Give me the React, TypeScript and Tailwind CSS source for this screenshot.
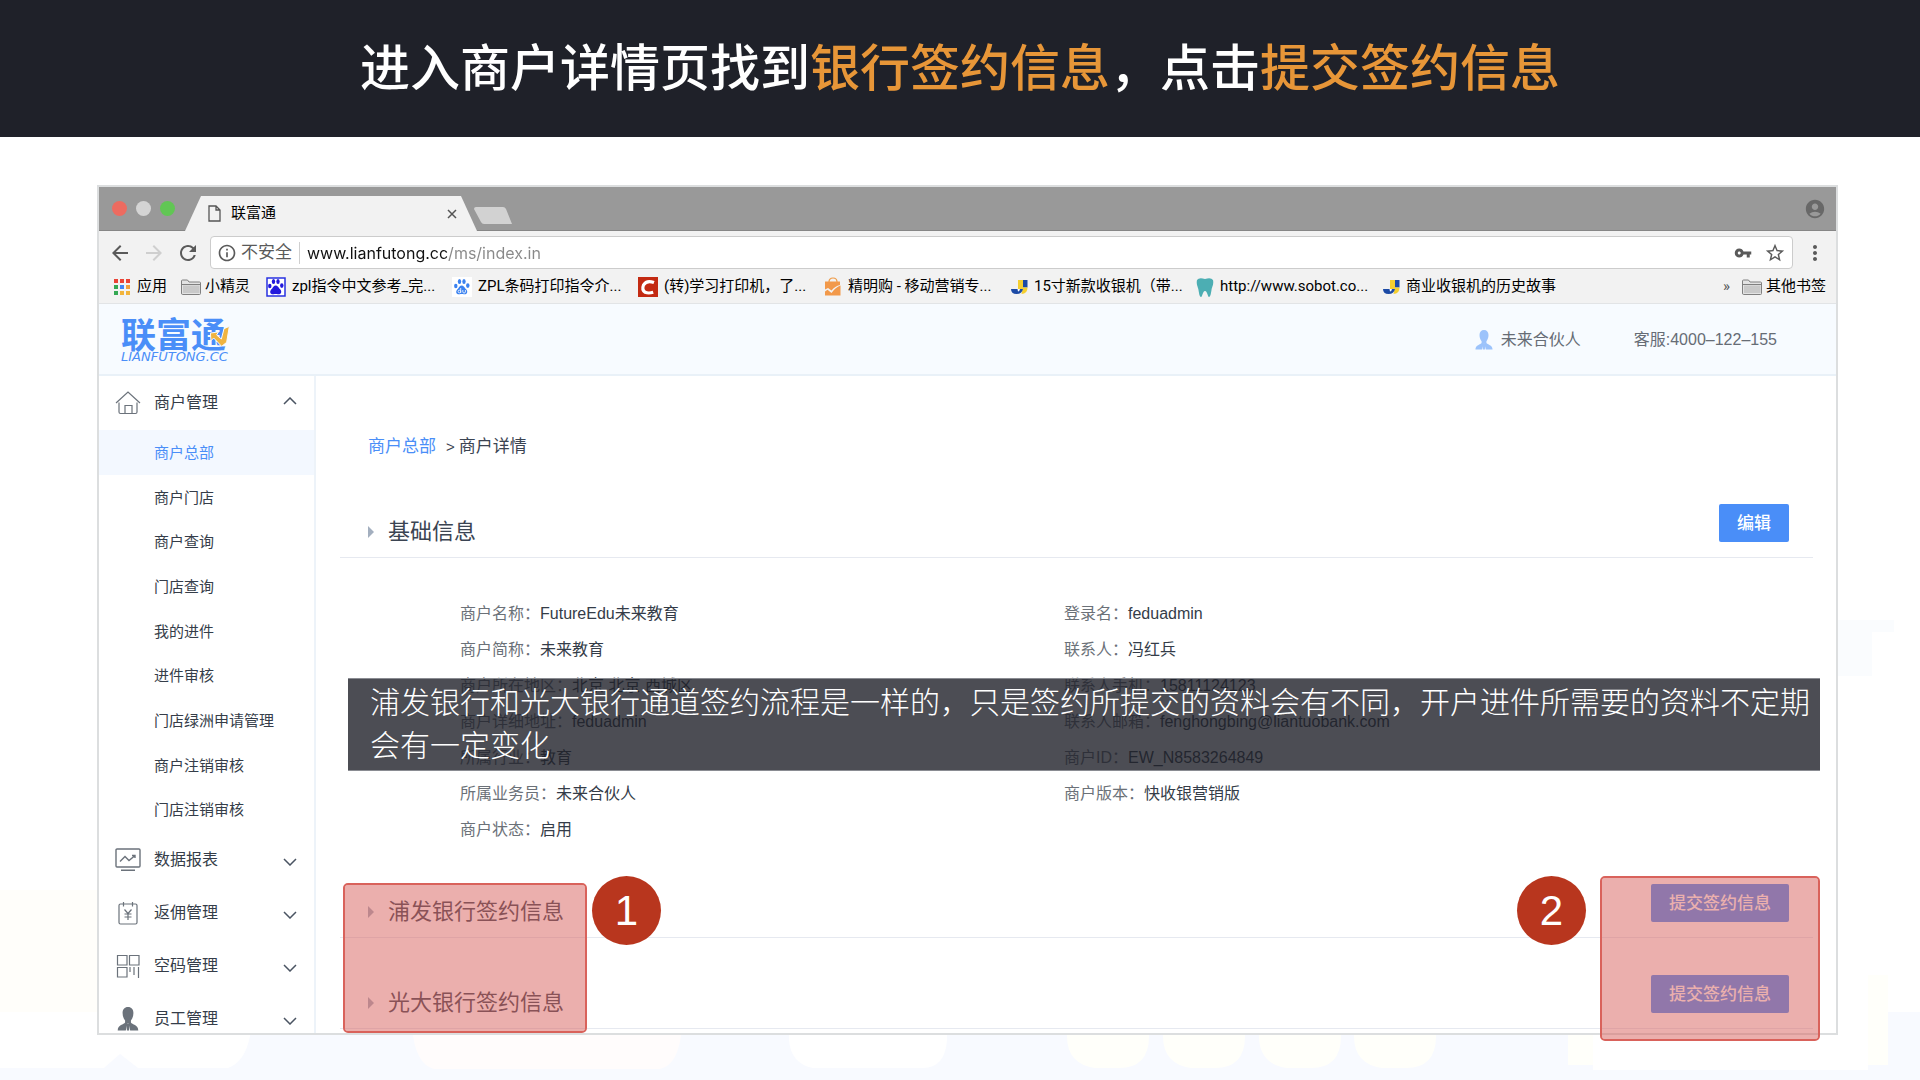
import React from 'react';
import {
  MdAccountCircle,
  MdArrowBack,
  MdArrowForward,
  MdInfoOutline,
  MdMoreVert,
  MdRefresh,
  MdStarBorder,
  MdVpnKey,
} from 'react-icons/md';

type IconProps = { className?: string };

/* ---------- Bookmark icons ---------- */

const AppsIcon: React.FC = () => (
  <svg viewBox="0 0 16 16" className="h-4 w-4 shrink-0">
    <path d="M0 0h4v4H0zM6 0h4v4H6zM12 0h4v4h-4z" fill="#ea4335" />
    <path d="M0 6h4v4H0z" fill="#34a853" />
    <path d="M6 6h4v4H6z" fill="#4285f4" />
    <path d="M12 6h4v4h-4z" fill="#f29f3b" />
    <path d="M0 12h4v4H0z" fill="#34a853" />
    <path d="M6 12h4v4H6zM12 12h4v4h-4z" fill="#f2b43b" />
  </svg>
);

const FolderIcon: React.FC = () => (
  <svg viewBox="0 0 20 16" className="h-4 w-5 shrink-0">
    <path d="M.5 14V2Q.5 1 1.5 1h5L8 3h10.500Q19.500 3 19.500 4v10.500Q19.500 15.500 18.500 15.500h-17Q.5 15.500.5 14z" fill="#e3e3e3" stroke="#808080" />
    <path d="M2 6.500h16.500v7.500H2z" fill="#c9c9c9" />
    <path d="M1 5.500h18" stroke="#808080" />
  </svg>
);

const Paw: React.FC<{ fill: string }> = ({ fill }) => (
  <g fill={fill}>
    <ellipse cx="3.800" cy="9" rx="1.700" ry="2.300" />
    <ellipse cx="7.500" cy="4.600" rx="1.700" ry="2.500" />
    <ellipse cx="12" cy="4.600" rx="1.700" ry="2.500" />
    <ellipse cx="15.800" cy="8.600" rx="1.700" ry="2.300" />
    <path d="M9.700 8.600c1.900 0 2.400 1.600 3.600 2.800 1.300 1.200 2.200 2.100 1.900 3.900-.3 1.800-2 2.300-3.400 1.900-1.500-.4-2.700-.4-4.100 0-1.500.4-3.300-.2-3.500-2-.2-1.700.9-2.700 2-3.800 1.200-1.200 1.500-2.800 3.500-2.800z" />
  </g>
);

const BaiduSolidIcon: React.FC = () => (
  <svg viewBox="0 0 20 20" className="h-5 w-5 shrink-0">
    <rect x="1" y="1" width="18" height="18" fill="#fff" stroke="#2932e1" strokeWidth="1.500" />
    <Paw fill="#2319dc" />
  </svg>
);

const BaiduIcon: React.FC = () => (
  <svg viewBox="0 0 20 20" className="h-5 w-5 shrink-0">
    <rect width="20" height="20" fill="#fff" />
    <Paw fill="#3b82f0" />
    <path d="M8.700 11v5M8.700 14.500a1.300 1.300 0 1 0-2.600 0 1.300 1.300 0 0 0 2.600 0M10.800 13v2q.1 1 1.300 1t1.300-1v-2" fill="none" stroke="#fff" strokeWidth=".8" />
  </svg>
);

const CsdnIcon: React.FC = () => (
  <svg viewBox="0 0 20 20" className="h-5 w-5 shrink-0">
    <rect width="20" height="20" fill="#c32a12" />
    <path d="M16 5.500Q8.500 2.800 5.500 8q-2 5 1.700 7.300 3.200 1.400 8 0" fill="none" stroke="#fff" strokeWidth="3.200" />
  </svg>
);

const BagIcon: React.FC = () => (
  <svg viewBox="0 0 18 20" className="h-5 w-[18px] shrink-0">
    <path d="M5 5q0-4 4-4t4 4" fill="none" stroke="#ef9a45" strokeWidth="1.200" />
    <path d="M1 4.500h15v3.500q-5 1.200-8.500 5.500L4 11 1 12.500zM1 14.500l2.500-1.700 4 3.200q3.500-5.500 9-7.500V18.500H1z" fill="#f2994a" />
  </svg>
);

const JdIcon: React.FC = () => (
  <svg viewBox="0 0 18 18" className="h-[18px] w-[18px] shrink-0">
    <path d="M8 2h5v9H8z" fill="#f5cf2f" />
    <path d="M13 2h4.500v7.500H13z" fill="#1c4aa5" />
    <path d="M17.500 9.500q0 6.500-6 6.500l1.500-6.500z" fill="#f5cf2f" />
    <path d="M1 11h12q-1 5-6.500 5Q1 16 1 11z" fill="#1c4aa5" />
    <path d="M7.500 11l.5 2.500q1.500 0 2-2.500z" fill="#fff" />
  </svg>
);

const ToothIcon: React.FC = () => (
  <svg viewBox="0 0 18 20" className="h-5 w-[18px] shrink-0">
    <path d="M1 3q2-3 8-1 6-2 8 1c1 4-1 7-1.500 10s-1 7-2.500 7-1.500-6-4-6-2.500 6-4 6-2-4-2.500-7S0 7 1 3z" fill="#4caeb3" />
  </svg>
);

/* ---------- App icons ---------- */

const PersonIcon: React.FC<IconProps> = ({ className }) => (
  <svg viewBox="0 0 20 24" className={className} fill="currentColor">
    <path d="M10 1c3.200 0 5 2.300 5 5.500 0 3-1 5.200-2.300 6.800v2c1 2 6.800 2 6.800 7.200H12l-1.200-5L10 15.800l-.8 1.700L8 22.500H.5c0-5.200 5.800-5.200 6.800-7.200v-2C6 11.700 5 9.500 5 6.500 5 3.300 6.800 1 10 1z" />
    <path d="M8.700 16.500h2.600L11 22.500H9z" />
  </svg>
);

const HomeIcon: React.FC<IconProps> = ({ className }) => (
  <svg viewBox="0 0 26 26" className={className} fill="none" stroke="currentColor" strokeWidth="1.200">
    <path d="M1 13L13 2l12 11M4 12.500V22q0 1.500 1.500 1.500h15Q22 23.500 22 22v-9.500M10 23.500V15.500h7v8" />
  </svg>
);

const ReportIcon: React.FC<IconProps> = ({ className }) => (
  <svg viewBox="0 0 26 26" className={className} fill="none" stroke="currentColor" strokeWidth="1.400">
    <rect x="1" y="2" width="24" height="18" rx="1" />
    <path d="M5 14.500l5-5 4 4L19.500 9M17 8.500h3V11M6 23.300h14" />
  </svg>
);

const RebateIcon: React.FC<IconProps> = ({ className }) => (
  <svg viewBox="0 0 26 26" className={className} fill="none" stroke="currentColor" strokeWidth="1.200">
    <rect x="4" y="4" width="18" height="20" rx="1.500" />
    <path d="M8.500 2v4.500M17.500 2v4.500M9.500 9.500l3.500 4 3.500-4M13 13.500V20M9.500 14h7M9.500 17h7" />
  </svg>
);

const QrIcon: React.FC<IconProps> = ({ className }) => (
  <svg viewBox="0 0 26 26" className={className} fill="none" stroke="currentColor" strokeWidth="1.200">
    <path d="M2.500 2.500H12V12H2.500zM14.500 2.500H24V12h-9.500zM2.500 14.500H12V24H2.500zM15 14v5M19 14v8M23.500 14v11" />
  </svg>
);

const ChevronIcon: React.FC<{ up?: boolean }> = ({ up }) => (
  <svg viewBox="0 0 14 8" className="h-2 w-3.5" fill="none" stroke="#4a5462" strokeWidth="1.500">
    <path d={up ? 'M1 7l6-6 6 6' : 'M1 1l6 6 6-6'} />
  </svg>
);

/* ---------- Data ---------- */

const bookmarks = [
  { icon: BaiduSolidIcon, text: 'zpl指令中文参考_完...' },
  { icon: BaiduIcon, text: 'ZPL条码打印指令介...' },
  { icon: CsdnIcon, text: '(转)学习打印机，了...' },
  { icon: BagIcon, text: '精明购 - 移动营销专...' },
  { icon: JdIcon, text: '15寸新款收银机（带...' },
  { icon: ToothIcon, text: 'http://www.sobot.co...' },
  { icon: JdIcon, text: '商业收银机的历史故事' },
];

const merchantMenu = [
  '商户总部',
  '商户门店',
  '商户查询',
  '门店查询',
  '我的进件',
  '进件审核',
  '门店绿洲申请管理',
  '商户注销审核',
  '门店注销审核',
];

const groups = [
  { icon: ReportIcon, text: '数据报表' },
  { icon: RebateIcon, text: '返佣管理' },
  { icon: QrIcon, text: '空码管理' },
  { icon: PersonIcon, text: '员工管理' },
];

const leftFields = [
  ['商户名称：', 'FutureEdu未来教育'],
  ['商户简称：', '未来教育'],
  ['商户所在地区：', '北京 北京 西城区'],
  ['商户详细地址：', 'feduadmin'],
  ['所属行业：', '教育'],
  ['所属业务员：', '未来合伙人'],
  ['商户状态：', '启用'],
];

const rightFields = [
  ['登录名：', 'feduadmin'],
  ['联系人：', '冯红兵'],
  ['联系人手机：', '15811124123'],
  ['联系人邮箱：', 'fenghongbing@liantuobank.com'],
  ['商户ID：', 'EW_N8583264849'],
  ['商户版本：', '快收银营销版'],
];

/* ---------- Browser chrome ---------- */

const TabStrip: React.FC = () => (
  <div className="flex h-11 items-end border-b border-[#868686] bg-[#999999]">
    <div className="mb-[14px] ml-[13px] flex gap-[9px]">
      <span className="h-[15px] w-[15px] rounded-full bg-[#ed6b60]" />
      <span className="h-[15px] w-[15px] rounded-full bg-[#d4d4d4]" />
      <span className="h-[15px] w-[15px] rounded-full bg-[#61c654]" />
    </div>
    <div className="-mb-px ml-[10px] flex h-[35px] w-[292px] items-center bg-[#f2f2f2] pr-5 pl-[23px] [clip-path:polygon(16px_0,276px_0,100%_100%,0_100%)]">
      <svg viewBox="0 0 13 17" className="h-[17px] w-[13px]" fill="none" stroke="#555" strokeWidth="1.300">
        <path d="M1 1h7l4 4v11H1zM8 1v4h4" />
      </svg>
      <span className="ml-2.5 text-[15px] text-black">联富通</span>
      <button aria-label="关闭标签页" className="ml-auto">
        <svg viewBox="0 0 10 10" className="h-2.5 w-2.5" stroke="#555" strokeWidth="1.500">
          <path d="M1 1l8 8M9 1L1 9" />
        </svg>
      </button>
    </div>
    <button aria-label="新建标签页" className="mb-1.5 ml-[-3px]">
      <svg viewBox="0 0 38 17" className="h-[17px] w-[38px]">
        <path d="M2 0h27q2 0 3 2l6 15H10q-2 0-3-2L0 2Q0 0 2 0z" fill="#d2d2d2" />
      </svg>
    </button>
    <MdAccountCircle className="mr-[10px] mb-[10px] ml-auto h-[22px] w-[22px] text-[#686868]" />
  </div>
);

const Toolbar: React.FC = () => (
  <div className="flex h-[43px] items-center bg-[#f2f2f2] pr-[9px] pl-[9px] text-[#5a5a5a]">
    <button aria-label="后退"><MdArrowBack className="h-6 w-6" /></button>
    <button aria-label="前进" className="ml-[10px] text-[#cfcfcf]"><MdArrowForward className="h-6 w-6" /></button>
    <button aria-label="刷新" className="ml-[10px]"><MdRefresh className="h-6 w-6" /></button>
    <div className="ml-[10px] flex h-[33px] flex-1 items-center rounded-[4px] border border-[#cccccc] bg-white pr-1.5 pl-1.5">
      <MdInfoOutline className="h-5 w-5" />
      <span className="ml-1 text-[17px]">不安全</span>
      <span className="mx-[7px] h-[22px] w-px bg-[#cfcfcf]" />
      <input
        aria-label="地址"
        defaultValue="www.lianfutong.cc/ms/index.in"
        className="min-w-0 flex-1 bg-[linear-gradient(90deg,#111_140px,#888_140px)] bg-clip-text text-base text-transparent caret-black outline-none"
      />
      <MdVpnKey className="h-[18px] w-[18px]" />
      <button aria-label="收藏" className="ml-3"><MdStarBorder className="h-[22px] w-[22px]" /></button>
    </div>
    <button aria-label="菜单" className="ml-[10px]"><MdMoreVert className="h-6 w-6" /></button>
  </div>
);

const BookmarksBar: React.FC = () => (
  <nav className="flex h-[30px] items-center border-b border-[#e2e4e6] bg-[#f2f2f2] pr-2.5 pb-1 pl-[15px] text-[15px] font-[Roboto,'Noto_Sans_CJK_SC',sans-serif] whitespace-nowrap text-black">
    <a href="#apps" className="flex w-[67px] items-center gap-[7px]"><AppsIcon />应用</a>
    <a href="#folder" className="flex w-[85px] items-center gap-1"><FolderIcon />小精灵</a>
    {bookmarks.map(({ icon: BookmarkIcon, text }) => (
      <a key={text} href="#bookmark" className="flex w-[186px] items-center gap-1.5">
        <BookmarkIcon />
        {text}
      </a>
    ))}
    <button className="ml-auto text-[#555]" aria-label="更多书签">»</button>
    <a href="#others" className="ml-3 flex items-center gap-1"><FolderIcon />其他书签</a>
  </nav>
);

/* ---------- Merchant console ---------- */

const Logo: React.FC = () => (
  <a href="#home" className="relative block w-[112px] pt-1 text-[#4a8ef8]">
    <span className="block text-[35px] leading-8 font-bold">联富通</span>
    <span className="block font-['DejaVu_Sans',sans-serif] text-[13px] leading-[10px] italic">LIANFUTONG.CC</span>
    <svg viewBox="300 60 60 60" className="absolute top-2.5 left-[89px] h-5 w-5">
      <path d="M301 81l24-3-5 9 14 12 8-31 16-7-8 48-15 12-24-25-8 8z" fill="#efb441" stroke="#f7fbff" strokeWidth="3" />
    </svg>
  </a>
);

const ConsoleHeader: React.FC = () => (
  <header className="flex h-[72px] items-center border-b-2 border-[#e9f1f8] bg-[#f7fbff] pr-[59px] pl-[22px] text-base text-[#666c75]">
    <Logo />
    <div className="ml-auto flex items-center gap-2 pt-0.5">
      <PersonIcon className="h-[22px] w-[18px] text-[#9cc3fb]" />
      未来合伙人
    </div>
    <div className="ml-[53px] pt-0.5">客服:4000–122–155</div>
  </header>
);

const Sidebar: React.FC = () => (
  <aside className="w-[217px] shrink-0 border-r-2 border-[#edf3f9] text-[#353d49]">
    <button className="flex h-[54px] w-full items-center pr-[17px] pl-4 text-base">
      <HomeIcon className="h-[26px] w-[26px] text-[#6b727b]" />
      <span className="ml-[13px]">商户管理</span>
      <span className="mb-1 ml-auto"><ChevronIcon up /></span>
    </button>
    <ul className="grid h-[402px] auto-rows-fr text-[15px]">
      {merchantMenu.map((item, i) => (
        <li key={item} className={i === 0 ? 'bg-[#f3f8ff] text-[#4a8ef8]' : ''}>
          <a href="#menu" className="flex h-full items-center pt-0.5 pl-[55px]">{item}</a>
        </li>
      ))}
    </ul>
    <div className="flex flex-col gap-6 pt-[13px] text-base">
      {groups.map(({ icon: GroupIcon, text }) => (
        <button key={text} className="flex h-[29px] w-full items-center pr-[17px] pl-4">
          <GroupIcon className="h-[26px] w-[26px] text-[#6b727b]" />
          <span className="ml-[13px]">{text}</span>
          <span className="mt-1 ml-auto"><ChevronIcon /></span>
        </button>
      ))}
    </div>
  </aside>
);

const SectionHead: React.FC<{ title: string; action: string; className?: string }> = ({ title, action, className }) => (
  <div className={`flex items-start border-b border-[#e6e9f0] pr-6 pb-[10px] pl-7 ${className}`}>
    <div className="mt-[13px] flex items-center gap-[14px]">
      <svg viewBox="0 0 6 12" className="h-3 w-1.5" fill="#a3afbf"><path d="M0 0l6 6-6 6z" /></svg>
      <h2 className="text-[22px] leading-[30px] text-[#3b4452]">{title}</h2>
    </div>
    <button className="ml-auto h-[38px] rounded-[2px] bg-[#4a8ef8] px-[18px] pt-0.5 text-[17px] font-medium text-white">{action}</button>
  </div>
);

const FieldList: React.FC<{ fields: string[][] }> = ({ fields }) => (
  <dl className="text-base">
    {fields.map(([label, value]) => (
      <div key={label} className="flex h-9 items-center">
        <dt className="text-[#6b7178]">{label}</dt>
        <dd className="text-[#343c48]">{value}</dd>
      </div>
    ))}
  </dl>
);

const StepBadge: React.FC<{ step: number; className: string }> = ({ step, className }) => (
  <span className={`absolute flex h-[69px] w-[69px] items-center justify-center rounded-full bg-[#b8361e] text-[42px] leading-none text-white ${className}`}>
    {step}
  </span>
);

const MerchantDetail: React.FC = () => (
  <main className="relative min-w-0 flex-1 pt-[57px] pr-[23px] pb-1 pl-6">
    <nav className="flex items-center pl-7 text-[17px] leading-7 text-[#3b4452]">
      <a href="#merchants" className="text-[#4a8ef8]">商户总部</a>
      <span className="mr-1 ml-2.5 text-[15px]">&gt;</span>
      <span>商户详情</span>
    </nav>

    <SectionHead title="基础信息" action="编辑" className="mt-[43px]" />
    <div className="mt-[38px] grid grid-cols-2 pr-[145px] pl-[120px]">
      <FieldList fields={leftFields} />
      <FieldList fields={rightFields} />
    </div>
    <SectionHead title="浦发银行签约信息" action="提交签约信息" className="mt-9" />
    <SectionHead title="光大银行签约信息" action="提交签约信息" className="mt-[37px]" />

    {/* Tutorial callouts */}
    <p className="absolute top-[302px] right-4 left-8 border-y border-[#8a8c92] bg-[#1f2129]/80 pt-0.5 pb-[3px] pl-[22px] text-[30px] leading-[43px] font-light text-white">
      浦发银行和光大银行通道签约流程是一样的，只是签约所提交的资料会有不同，开户进件所需要的资料不定期会有一定变化
    </p>
    <div className="absolute top-[507px] left-[27px] h-[150px] w-[244px] rounded-[5px] border-2 border-[#d9625b] bg-[#d8605b]/50 bg-clip-padding" />
    <StepBadge step={1} className="top-[500px] left-[276px]" />
    <StepBadge step={2} className="top-[500px] right-[250px]" />
    <div className="absolute top-[500px] right-4 h-[165px] w-[220px] rounded-[5px] border-2 border-[#d9625b] bg-[#d8605b]/50 bg-clip-padding" />
  </main>
);

/* Pale street scene behind the window */
const Backdrop: React.FC = () => (
  <svg viewBox="0 0 1920 480" preserveAspectRatio="none" className="absolute bottom-0 left-0 h-[480px] w-full">
    <path d="M1838 20h56v12h-22v44h-34z" fill="#fafcfe" />
    <path d="M0 290h97v122H0z" fill="#fffefa" />
    <path d="M0 412h1920v68H0z" fill="#f8faff" />
    <path d="M0 412h250v24q-5 26-22 32H138l-18-14-16 14H0z" fill="#fff" />
    <path d="M412 412h270v15q-3 38-22 42H434q-19-5-22-42z" fill="#fffcfc" />
    <path d="M789 412h158v28q-2 28-24 28H813q-22-4-24-28z" fill="#fff" />
    <path d="M1067 412h82v24q0 32-30 32h-24q-28-4-28-32zM1163 412h82v24q0 32-30 32h-24q-28-4-28-32zM1259 412h82v24q0 32-30 32h-24q-28-4-28-32zM1354 412h82v24q0 32-30 32h-24q-28-4-28-32z" fill="#fffffa" />
    <path d="M1568 375h320v90h-320z" fill="#fffffa" />
    <path d="M1593 375h275v95h-275z" fill="#fff" />
  </svg>
);

export default function App() {
  return (
    <div className="relative min-h-screen bg-white font-[Inter,'Noto_Sans_CJK_SC',sans-serif]">
      <Backdrop />
      <h1 className="flex h-[137px] items-center justify-center bg-[#1f2129] text-[50px] font-medium text-white">
        <span>
          进入商户详情页找到<span className="text-[#e79638]">银行签约信息</span>，点击<span className="text-[#e79638]">提交签约信息</span>
        </span>
      </h1>
      <div className="relative mt-12 mr-[82px] ml-[97px] border-2 border-[#dcdedf] bg-white">
        <TabStrip />
        <Toolbar />
        <BookmarksBar />
        <div className="font-['Liberation_Sans','Noto_Sans_CJK_SC',sans-serif]">
          <ConsoleHeader />
          <div className="flex">
            <Sidebar />
            <MerchantDetail />
          </div>
        </div>
      </div>
    </div>
  );
}
